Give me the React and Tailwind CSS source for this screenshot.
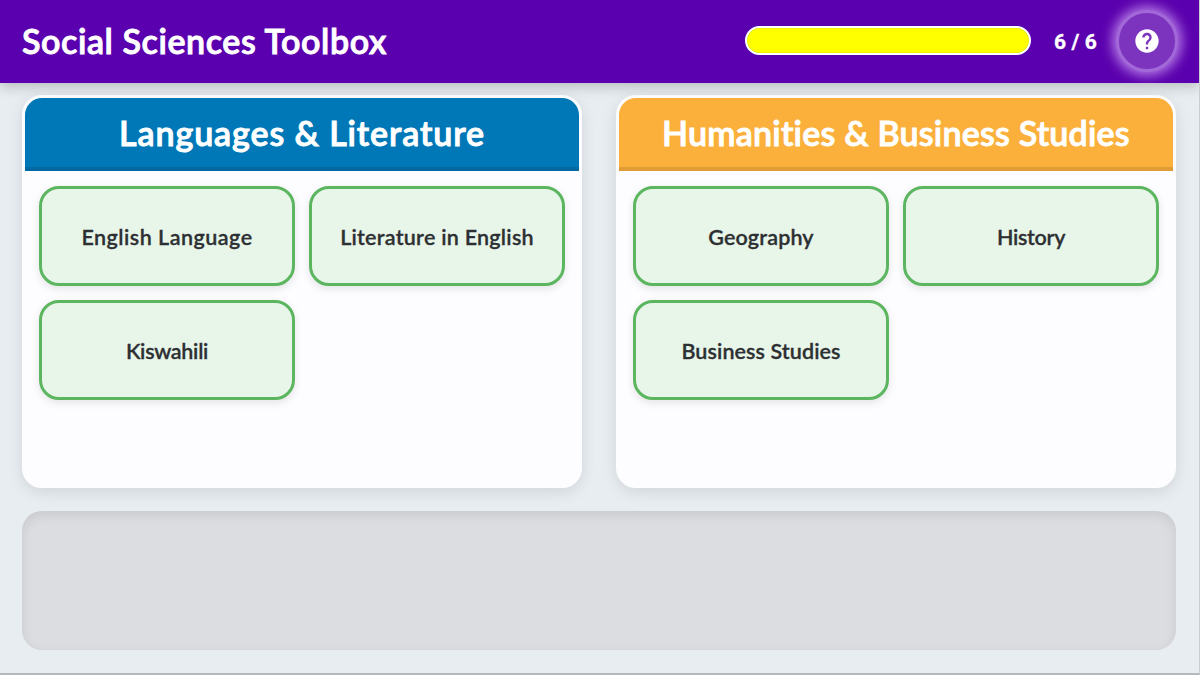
import { MdHelp } from "react-icons/md";

const panels = [
  {
    title: "Languages & Literature",
    header: "bg-[#0078b7] border-[#0069a4]",
    spacing: "tracking-[0.88px]",
    items: [
      { name: "English Language", spacing: "tracking-[0.48px]" },
      { name: "Literature in English", spacing: "tracking-[0.25px]" },
      { name: "Kiswahili", spacing: "tracking-[-0.3px]" },
    ],
  },
  {
    title: "Humanities & Business Studies",
    header: "bg-[#fbb03b] border-[#e09c35]",
    spacing: "tracking-[0.2px]",
    items: [
      { name: "Geography", spacing: "tracking-[0.15px]" },
      { name: "History", spacing: "tracking-[-0.3px]" },
      { name: "Business Studies", spacing: "tracking-[0.1px]" },
    ],
  },
];

function Panel({ title, header, spacing, items }) {
  return (
    <section className="flex-1 overflow-hidden rounded-[20px] border-[3px] border-[#fdfdff] bg-[#fdfdff] shadow-[0_4px_15px_rgba(0,0,0,0.1)]">
      <h2
        className={`flex h-[73px] items-center justify-center whitespace-nowrap border-b-4 text-[34px] leading-none font-semibold text-white [-webkit-text-stroke:0.9px_white] [stroke-linejoin:round] ${header} ${spacing}`}
      >
        <span>{title}</span>
      </h2>
      <div className="grid grid-cols-2 gap-3.5 px-3.5 pt-[15px]">
        {items.map((item) => (
          <div
            key={item.name}
            className={`flex h-[100px] items-center justify-center whitespace-nowrap rounded-[20px] border-[3px] border-[#5cb660] bg-[#e8f5e9] pt-0.5 text-[21.5px] font-semibold text-[#2d3032] shadow-[0_3px_8px_rgba(0,0,0,0.1)] [-webkit-text-stroke:0.3px_#2d3032] [stroke-linejoin:round] ${item.spacing}`}
          >
            <span>{item.name}</span>
          </div>
        ))}
      </div>
    </section>
  );
}

export default function App() {
  return (
    <div className="h-[675px] w-[1200px] overflow-hidden border-r border-b-2 border-r-[#c9ced3] border-b-[#b4b9bd] bg-[#e8edf1] font-['Lato',sans-serif]">
      <header className="relative z-10 flex h-[83px] items-center bg-[#5b00ae] pr-[21px] pl-[22px] text-white shadow-[0_4px_12px_rgba(0,0,0,0.2)]">
        <h1 className="mb-0.5 flex-1 whitespace-nowrap text-[34px] leading-none font-semibold tracking-[0.58px] [-webkit-text-stroke:0.9px_white] [stroke-linejoin:round]">
          Social Sciences Toolbox
        </h1>
        <div className="mb-0.5 h-[29px] w-[286px] rounded-full border-2 border-white bg-[#ffff00] shadow-[inset_0_0_1px_rgba(80,80,0,0.7)]" />
        <div className="mt-px ml-[23px] w-[44px] whitespace-nowrap font-['Roboto',sans-serif] text-[21px] leading-none font-bold tracking-[1px] [word-spacing:-1.8px] [-webkit-text-stroke:0.3px_white]">
          6 / 6
        </div>
        <button className="mb-0.5 ml-[18px] flex size-[62px] shrink-0 items-center justify-center rounded-full border-[3px] border-[#a268d8] bg-[#7c33be] shadow-[0_0_12px_4px_rgba(225,185,255,0.65)]">
          <MdHelp className="size-7" />
        </button>
      </header>
      <main>
        <div className="flex h-[405px] gap-[34px] pt-3 pr-[23px] pl-[22px]">
          {panels.map((panel) => (
            <Panel key={panel.title} {...panel} />
          ))}
        </div>
        <div className="mt-[23px] mr-[23px] ml-[22px] h-[139px] rounded-[20px] bg-[#dcdde0] shadow-[inset_0_4px_12px_rgba(0,0,0,0.09)]" />
      </main>
    </div>
  );
}
